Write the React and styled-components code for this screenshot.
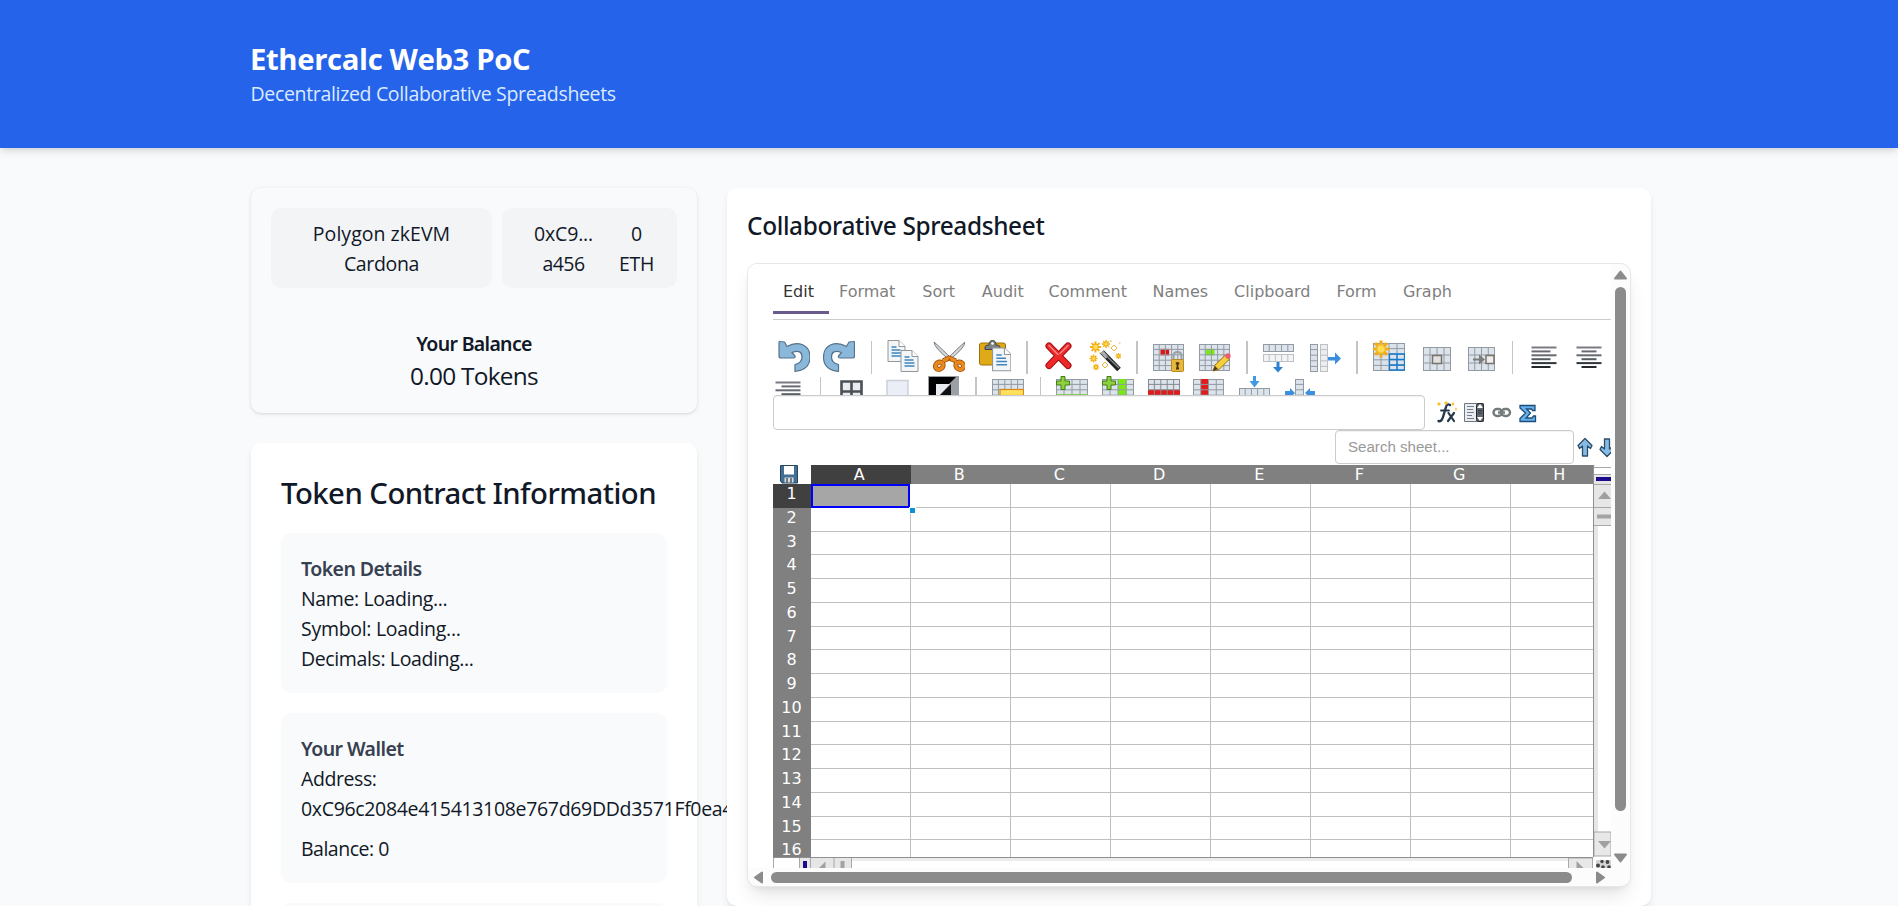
import React from "react";
import styled, { createGlobalStyle, css } from "styled-components";

const GlobalStyle = createGlobalStyle`
  * { box-sizing: border-box; }
  body {
    margin: 0;
    height: 906px;
    overflow: hidden;
    background: #f9fafb;
    color: #111827;
    font-family: "Open Sans", "Noto Sans", sans-serif;
    font-size: 19.5px;
    line-height: 30px;
  }
  h1, h2, h3, p { margin: 0; }
`;

/* ---------- page ---------- */

const Header = styled.header`
  height: 148px;
  padding: 40px 250px;
  background: #2563eb;
  box-shadow: 0 5px 8px -1px rgba(0, 0, 0, 0.1), 0 2px 5px -2px rgba(0, 0, 0, 0.1);
`;

const Title = styled.h1`
  font-size: 29.3px;
  font-weight: 700;
  line-height: 39px;
  letter-spacing: -0.38px;
  color: #fff;
`;

const Subtitle = styled.p`
  padding-left: 0.5px;
  color: #dbeafe;
  letter-spacing: -0.33px;
`;

const Main = styled.main`
  display: grid;
  grid-template-columns: 446px 924px;
  column-gap: 30px;
  align-items: start;
  padding: 40px 0 0 251px;
  height: 758px;
  overflow: hidden;
`;

const Sidebar = styled.div`
  display: flex;
  flex-direction: column;
  gap: 30px;
`;

const Text = styled.p`
  letter-spacing: ${(p) => p.$track ?? -0.33}px;
  white-space: nowrap;
`;

const cardShadow = css`
  box-shadow: 0 5px 8px -1px rgba(0, 0, 0, 0.08), 0 2px 5px -2px rgba(0, 0, 0, 0.08);
`;

const AccountCard = styled.section`
  height: 225px;
  padding: 20px;
  border-radius: 10px;
  text-align: center;
  box-shadow: 0 1px 4px rgba(0, 0, 0, 0.1), 0 1px 2px rgba(0, 0, 0, 0.06);
`;

const AccountButtons = styled.div`
  display: flex;
  gap: 10px;
  margin-bottom: 41px;
`;

const Pill = styled.div`
  display: flex;
  justify-content: center;
  gap: 26px;
  width: ${(p) => p.$width}px;
  height: 80px;
  padding: 11px 0 9px ${(p) => p.$indent ?? 0}px;
  border-radius: 10px;
  background: #f3f4f6;
`;

const BalanceLabel = styled(Text)`
  font-family: "Noto Sans", sans-serif;
  font-weight: 600;
`;

const BalanceValue = styled(Text)`
  font-size: 24.4px;
  line-height: 34px;
`;

const TokenCard = styled.section`
  height: 760px;
  padding: 30px;
  border-radius: 10px;
  background: #fff;
  ${cardShadow}
`;

const TokenTitle = styled.h2`
  margin-bottom: 20px;
  font-family: "Noto Sans", sans-serif;
  font-size: 29.3px;
  font-weight: 500;
  line-height: 40px;
  letter-spacing: -0.53px;
  white-space: nowrap;
`;

const InfoBox = styled.div`
  height: ${(p) => p.$height}px;
  margin-bottom: 20px;
  padding: 21px 20px 19px;
  border-radius: 10px;
  background: #f9fafb;
`;

const InfoTitle = styled.h3`
  font-family: "Noto Sans", sans-serif;
  font-size: 19.5px;
  font-weight: 600;
  letter-spacing: -0.56px;
  color: #374151;
`;

const WalletBalance = styled(Text)`
  margin-top: 10px;
`;

/* ---------- spreadsheet card ---------- */

const SheetCard = styled.section`
  position: relative;
  height: 718px;
  padding: 20px;
  border-radius: 10px;
  background: #fff;
  ${cardShadow}
`;

const SheetTitle = styled.h2`
  padding-top: 1px;
  margin-bottom: 20px;
  font-family: "Noto Sans", sans-serif;
  font-size: 24.4px;
  font-weight: 500;
  line-height: 34px;
  letter-spacing: -0.36px;
`;

const Frame = styled.div`
  display: grid;
  grid-template-columns: 863px 19px;
  grid-template-rows: 604px 18px;
  width: 884px;
  height: 624px;
  border: 1px solid #e5e7eb;
  border-radius: 10px;
  overflow: hidden;
  background: #fcfcfc;
  box-shadow: 0 12px 19px -4px rgba(0, 0, 0, 0.1), 0 5px 8px -5px rgba(0, 0, 0, 0.1);
`;

const Viewport = styled.div`
  padding-left: 25px;
  overflow: hidden;
  background: #fff;
  font-family: "DejaVu Sans", sans-serif;
  font-size: 16px;
  line-height: 20px;
`;

const Tabs = styled.nav`
  display: flex;
  height: 56px;
  border-bottom: 1px solid #ccc;
`;

const Tab = styled.div`
  flex: none;
  width: ${(p) => p.$width}px;
  height: 50px;
  padding: 18px 0 0 10px;
  border-bottom: 3px solid ${(p) => (p.$active ? "#6b5a8c" : "transparent")};
  color: ${(p) => (p.$active ? "#333" : "#808080")};
`;

const Toolbar = styled.div`
  height: 75px;
  padding: 20px 0 0 4.5px;
  overflow: hidden;
`;

const ToolRow = styled.div`
  display: flex;
  width: 900px;
  height: 36px;
  margin-left: ${(p) => p.$shift ?? 0}px;
`;

const Tool = styled.svg`
  flex: none;
  display: block;
  width: 32px;
  height: 33px;
  margin-right: 13.6px;
`;

const Divider = styled.span`
  flex: none;
  width: 1.4px;
  height: 33px;
  margin: 1px 15.4px 0 2px;
  background: #c4c4c4;
`;

const FormulaBar = styled.div`
  display: flex;
  align-items: center;
  height: 35px;
`;

const FormulaInput = styled.div`
  width: 652px;
  height: 35px;
  margin-right: 11px;
  border: 1px solid #ccc;
  border-radius: 4px;
  box-shadow: inset 0 1px 1px rgba(0, 0, 0, 0.06);
`;

const FormulaIcons = styled.svg`
  width: 110px;
  height: 24px;
`;

const SearchBar = styled.div`
  display: flex;
  align-items: center;
  height: 35px;
  padding-left: 562px;
`;

const SearchInput = styled.div`
  flex: none;
  width: 239px;
  height: 34px;
  margin: 0 2px 1px 0;
  padding-left: 12px;
  border: 1px solid #ccc;
  border-radius: 4px;
  box-shadow: inset 0 1px 1px rgba(0, 0, 0, 0.06);
  font: 15.1px/32px "Liberation Sans", Arial, sans-serif;
  color: #999;
`;

const SearchArrows = styled.svg`
  flex: none;
  width: 40px;
  height: 24px;
`;

const SheetArea = styled.div`
  display: grid;
  grid-template-columns: 820px 18px;
  grid-template-rows: 392px 12px;
`;

const Grid = styled.div`
  overflow: hidden;
`;

const GridRow = styled.div`
  display: grid;
  grid-template-columns: 38px repeat(8, 100px);
  width: 838px;
  height: ${(p) => p.$height ?? 23.75}px;
`;

const Corner = styled.div`
  padding-left: 7px;
`;

const Heading = styled.div`
  height: 100%;
  padding-right: ${(p) => p.$inset ?? 1}px;
  overflow: hidden;
  text-align: center;
  line-height: 20px;
  color: #fff;
  background: ${(p) => (p.$selected ? "#404040" : "#808080")};
`;

const Cell = styled.div`
  position: relative;
  border-right: 1px solid #c0c0c0;
  border-bottom: 1px solid #c0c0c0;
`;

const SelectedCell = styled(Cell)`
  z-index: 1;
  border: 2px solid #0000ff;
  background: #a6a6a6;
  margin-right: 1px;
`;

const FillHandle = styled.span`
  position: absolute;
  right: -8px;
  bottom: -8px;
  width: 7px;
  height: 7px;
  border: 1px solid #fff;
  background: #0e90d9;
`;

const ScrollDrawing = styled.svg`
  display: block;
  overflow: hidden;
`;

const SaveDrawing = styled.svg`
  display: block;
  width: 18px;
  height: 19px;
`;

const BottomBar = styled.div`
  grid-column: 1 / -1;
`;

/* ---------- icon parts ---------- */

const Table = ({ x = 0, y = 4, w = 31, h = 27, cols = 5, rows = 5, line = "#929aa3", fill = "#dce3eb", cells = [] }) => {
  const cw = w / cols;
  const rh = h / rows;
  return (
    <g>
      <rect x={x + 0.5} y={y + 0.5} width={w - 1} height={h - 1} fill={fill} stroke={line} />
      {cells.map(([c, r, cc, rr, color], i) => (
        <rect key={i} x={x + c * cw} y={y + r * rh} width={cc * cw} height={rr * rh} fill={color} />
      ))}
      {Array.from({ length: cols - 1 }, (_, i) => (
        <path key={"c" + i} d={`M${x + (i + 1) * cw} ${y}v${h}`} stroke={line} />
      ))}
      {Array.from({ length: rows - 1 }, (_, i) => (
        <path key={"r" + i} d={`M${x} ${y + (i + 1) * rh}h${w}`} stroke={line} />
      ))}
    </g>
  );
};

const Sheet = ({ x, y }) => (
  <g transform={`translate(${x} ${y})`}>
    <path d="M.5.5h11l6 6V21.500H.5z" fill="#f3f5f7" stroke="#92979c" />
    <path d="M11.500.5v6h6" fill="#fff" stroke="#92979c" />
    <path d="M4 7h5M4 10h9M4 13h10M4 16h10" stroke="#3f87c0" strokeWidth="1.300" />
  </g>
);

const Plus = () => (
  <path d="M5 .5h4v4.500h4.500v4H9v4.500H5V9H.5V5H5z" fill="#8fce3c" stroke="#3f7f14" />
);

const Star = ({ x, y, r }) => (
  <g transform={`translate(${x} ${y})`}>
    <path
      d={`M${-r} 0H${r}M0 ${-r}V${r}M${-r * 0.7} ${-r * 0.7}L${r * 0.7} ${r * 0.7}M${-r * 0.7} ${r * 0.7}L${r * 0.7} ${-r * 0.7}`}
      stroke="#f2ae12"
      strokeWidth={r / 2.7}
    />
    <circle r={r / 2} fill="#ffdc55" stroke="#eba90b" strokeWidth=".7" />
  </g>
);

const LINE_SHADES = ["#7a7a84", "#6a6a76", "#666a72", "#565c62", "#30363c", "#22282c"];

const Lines = ({ rows, y = 6.5, x = 2.5 }) => (
  <g>
    {rows.map(([a, w], i) => (
      <rect key={i} x={x + a} y={y + i * 3.9} width={w} height="2" fill={LINE_SHADES[i]} />
    ))}
  </g>
);

const UndoArrow = () => (
  <path
    d="M2 1.500Q1 1 1 3v13q0 2 2 2h12.500q2 0 1.500-2l-3-3.500Q24 9 24 17q0 6-7 7.500v7Q32 30 32 17C32 5 20 0 9 6.500L6.500 2z"
    fill="#8ab8da"
    stroke="#55718b"
    strokeWidth="1.200"
    strokeLinejoin="round"
  />
);

const LIME = "#79ea13";
const RED = "#e01b1b";

const ICONS = {
  undo: <UndoArrow />,
  redo: (
    <g transform="translate(32.500 0) scale(-1 1)">
      <UndoArrow />
    </g>
  ),
  copy: (
    <g>
      <Sheet x={0.5} y={0} />
      <Sheet x={13.5} y={10} />
    </g>
  ),
  cut: (
    <g>
      <path d="M1 2q0 6 17 19l2-1Q8 8 1 2zM32 2q0 6-17 19l-2-1Q25 8 32 2z" fill="#d4d7d9" stroke="#6d7175" strokeWidth=".9" />
      <g fill="none" stroke="#a95408" strokeWidth="5">
        <ellipse cx="6.300" cy="25.700" rx="4" ry="3.500" transform="rotate(-35 6.300 25.700)" />
        <ellipse cx="26.700" cy="25.700" rx="4" ry="3.500" transform="rotate(35 26.700 25.700)" />
        <path d="M10 21l6-3 7 3" />
      </g>
      <g fill="none" stroke="#e98a20" strokeWidth="3.200">
        <ellipse cx="6.300" cy="25.700" rx="4" ry="3.500" transform="rotate(-35 6.300 25.700)" />
        <ellipse cx="26.700" cy="25.700" rx="4" ry="3.500" transform="rotate(35 26.700 25.700)" />
        <path d="M10 21l6-3 7 3" />
      </g>
      <circle cx="16.500" cy="19.500" r="1" fill="#a95408" />
    </g>
  ),
  paste: (
    <g>
      <rect x=".5" y="3" width="26" height="22" rx="2" fill="#dfa917" stroke="#9b7209" />
      <path d="M6 9.500V7q0-2 4-2 0-4.500 3.500-4.500T17 5q4 0 4 2v2.500z" fill="#7d8184" stroke="#414548" />
      <circle cx="13.500" cy="3.500" r="1.300" fill="#fff" />
      <g transform="translate(13 7.500) scale(1.080)">
        <Sheet x={0} y={0} />
      </g>
    </g>
  ),
  erase: (
    <g strokeLinecap="round">
      <path d="M6 6l19 19.500M25 6L6 25.500" stroke="#a30d10" strokeWidth="7" />
      <path d="M6 6l19 19.500M25 6L6 25.500" stroke="#ee2929" strokeWidth="5" />
      <path d="M6 5.500l9 9M25 5.500l-8 8" stroke="#ff8585" strokeWidth="1.500" />
    </g>
  ),
  wand: (
    <g>
      <Star x={6.5} y={7} r={5.5} />
      <Star x={17} y={4} r={4} />
      <Star x={4.5} y={18.5} r={4} />
      <Star x={7} y={27} r={3.3} />
      <Star x={29.5} y={16} r={3} />
      <g fill="none" stroke="#eeb33c">
        <path d="M25 5l3 3-3 3-3-3zM16 22l3 3-3 3-3-3z" />
        <path d="M22 0v2M30 3h1.500M11 12v2" />
      </g>
      <path d="M13 12l17 17.500" stroke="#222" strokeWidth="5" />
      <path d="M13 12l5 5.500" stroke="#a7afb3" strokeWidth="3.500" />
      <path d="M17 15.500l13 12.500" stroke="#8b8f92" strokeWidth="1.100" />
    </g>
  ),
  lock: (
    <g>
      <Table cells={[[1.2, 0.9, 1.4, 1.2, "#d71616"]]} />
      <path d="M20.500 20v-4q0-4 4-4t4 4v4" fill="none" stroke="#9ba0a5" strokeWidth="2" />
      <rect x="18.500" y="19.500" width="12" height="12" rx="1" fill="#e7b83d" stroke="#b88a1f" />
      <path d="M24.500 22v6M22.800 23.500h3.500M23 28.500h3" stroke="#4c3608" strokeWidth="1.800" />
    </g>
  ),
  editCell: (
    <g>
      <Table cells={[[1.1, 0.9, 1.4, 1.2, LIME]]} />
      <path d="M14 31l2-6L26.500 15l4 4L20 29.500z" fill="#f6cf3a" stroke="#9b731b" />
      <path d="M14 31l2-5 3 3z" fill="#4b3820" />
      <circle cx="29" cy="16" r="2.700" fill="#ec5c74" />
    </g>
  ),
  merge: (
    <g>
      <Table y={4} h={8} rows={1} cols={5} />
      <Table y={14} h={8} rows={1} cols={5} fill="#f2f4f5" line="#bcc0c5" />
      <path d="M13.500 22h3v5h3.500l-5 5.500-5-5.500h3.500z" fill="#2c82d2" />
    </g>
  ),
  split: (
    <g>
      <Table x={1} w={8} h={28} cols={1} rows={5} />
      <Table x={11} w={8} h={28} cols={1} rows={5} fill="#eceeef" line="#bcc0c5" />
      <path d="M19 17h7V12.500l6 6-6 6v-4h-7z" fill="#3c8fdf" />
    </g>
  ),
  newTable: (
    <g>
      <Table y={3} w={32} h={28} cols={4} rows={5} />
      <path d="M16.500 14h15v16h-15zM16.500 19.500h15M16.500 25h15M24 14v16" fill="none" stroke="#1279d1" strokeWidth="1.300" />
      <Star x={8} y={9} r={8.5} />
    </g>
  ),
  cell: (
    <g>
      <Table x={4} y={7} w={28} h={24} cols={4} rows={3} />
      <rect x="13.500" y="15.500" width="9" height="8" fill="#e2e1df" stroke="#77726c" strokeWidth="1.500" />
    </g>
  ),
  move: (
    <g>
      <Table x={4} y={7} w={27} h={24} cols={4} rows={3} />
      <rect x="22" y="15.500" width="8" height="8" fill="#eee" stroke="#77726c" strokeWidth="1.500" />
      <path d="M9 18.500h6v-4l6 5-6 5v-4H9z" fill="#7c7c7c" />
    </g>
  ),
  alignLeft: <Lines rows={[[0, 25], [0, 19], [0, 25], [0, 19], [0, 25], [0, 19]]} />,
  alignCenter: <Lines rows={[[0, 25], [5, 15], [0, 25], [5, 15], [0, 25], [5, 15]]} />,
  alignRight: <Lines x={3.5} y={5.5} rows={[[0, 25], [6, 19], [0, 25], [6, 19], [0, 25], [6, 19]]} />,
  borders: <path d="M5.500 5.500h20v20h-20zM15.500 5.500v20M5.500 15.500h20" fill="#e9ecf0" stroke="#4b5055" strokeWidth="2.600" />,
  fill: <rect x="5" y="4.500" width="21" height="22" fill="#e9eef7" stroke="#ccd0d7" strokeWidth="1.500" />,
  contrast: (
    <g>
      <path d="M0 0h31v31H0z" fill="#9ba0a6" />
      <path d="M1 1h27L1 28z" fill="#000" />
      <path d="M8 8h14L8 23z" fill="#e8ebef" />
      <path d="M23 8v15H8z" fill="#111" />
    </g>
  ),
  rowHighlight: (
    <g>
      <Table y={3} w={32} h={27} />
      <rect x="8" y="13.500" width="23.500" height="6" fill="#ffe25c" stroke="#db8419" strokeWidth="1.200" />
    </g>
  ),
  addRow: (
    <g>
      <Table y={3} w={32} h={27} cols={4} cells={[[0, 2.8, 4, 1.3, LIME]]} />
      <Plus />
    </g>
  ),
  addCol: (
    <g>
      <Table y={3} w={32} h={27} cols={4} cells={[[2, 0, 1.1, 5, LIME]]} />
      <Plus />
    </g>
  ),
  delRow: <Table y={3} w={32} h={27} line="#858b91" cells={[[0, 2, 5, 1.2, RED]]} />,
  delCol: <Table y={3} w={31} h={27} cols={4} cells={[[1, 0, 1, 5, RED]]} />,
  insertRow: (
    <g>
      <Table y={12} h={8} rows={1} />
      <path d="M14 0h3v5h3.500l-5 6.500-5-6.500H14z" fill="#4298e2" />
    </g>
  ),
  insertCol: (
    <g>
      <Table x={11} y={3} w={9} h={27} cols={1} rows={5} />
      <path d="M1 15h5v-3l5 5-5 5v-3H1zM31 15h-5v-3l-5 5 5 5v-3h5z" fill="#3c8fdf" />
    </g>
  ),
};

const ROW_ONE = ["undo", "redo", "|", "copy", "cut", "paste", "|", "erase", "wand", "|", "lock", "editCell", "|", "merge", "split", "|", "newTable", "cell", "move", "|", "alignLeft", "alignCenter"];
const ROW_TWO = ["alignRight", "|", "borders", "fill", "contrast", "|", "rowHighlight", "|", "addRow", "addCol", "delRow", "delCol", "insertRow", "insertCol"];

const Tools = ({ names, shift }) => (
  <ToolRow $shift={shift}>
    {names.map((name, i) =>
      name === "|" ? <Divider key={i} /> : <Tool key={i} viewBox="0 0 32 33">{ICONS[name]}</Tool>
    )}
  </ToolRow>
);

const TABS = [["Edit", 56], ["Format", 83.3], ["Sort", 59.5], ["Audit", 66.8], ["Comment", 104], ["Names", 81.5], ["Clipboard", 102.3], ["Form", 66.5], ["Graph", 70]];
const COLUMNS = ["A", "B", "C", "D", "E", "F", "G", "H"];
const ROWS = Array.from({ length: 16 }, (_, i) => i + 1);

const SaveIcon = () => (
  <SaveDrawing viewBox="0 0 18 19">
    <path d="M.5.5h17v17.500H2L.5 16z" fill="#426f93" stroke="#25465f" />
    <rect x="4" y="1" width="10" height="8.500" fill="#fff" />
    <rect x="4.500" y="12.500" width="9" height="5" fill="#d8dcdf" />
    <path d="M7 13v5M11 13v5" stroke="#4c5962" strokeWidth="1.500" />
  </SaveDrawing>
);

const EditorIcons = () => (
  <FormulaIcons viewBox="0 0 110 24">
    <g fill="none" stroke="#26384b" strokeLinecap="round">
      <path d="M2.500 20q3 1 4.500-4l3-10q1-4 4-2" strokeWidth="2.400" />
      <path d="M5 9.500h8" strokeWidth="1.800" />
      <path d="M12.500 12l5.500 8M18 12l-6 8" strokeWidth="2.200" />
    </g>
    <path d="M3 1l2 2-2 2-2-2zM10 0l2 2-2 2-2-2zM17 1l1.500 2L17 5l-1.500-2zM20 6l1 2-1 2-1-2z" fill="#f8c42c" />
    <path d="M28.500 2.500h19v18h-19z" fill="#e9edf1" stroke="#6f7880" />
    <path d="M31 5.500h7M31 8.500h6M31 11.500h7M31 14.500h5M31 17.500h7" stroke="#75808c" strokeWidth="1.200" />
    <rect x="40.500" y="2.500" width="7" height="18" rx="2" fill="#60666b" stroke="#24282b" />
    <path d="M41 7l3-4 3 4zM41 16l3 4 3-4z" fill="#fff" />
    <path d="M42 9.500h4M42 12h4" stroke="#35393d" />
    <g fill="none" stroke="#737a7a" strokeWidth="2.400">
      <rect x="57.500" y="8" width="8.500" height="7" rx="3.500" />
      <rect x="65.500" y="8" width="8.500" height="7" rx="3.500" />
      <path d="M62 11.500h7" />
    </g>
    <path d="M84 4.500h15v5h-2.500l-1-1.500h-5l4 4-4.500 5h6l1.500-2h2v5.500H84v-3l5.500-5.500L84 7z" fill="#64b1ec" stroke="#1c4d78" strokeWidth="1.300" />
  </FormulaIcons>
);

const FindArrows = () => (
  <SearchArrows viewBox="0 0 40 24">
    <g fill="#85bbe4" stroke="#2c4d69" strokeWidth="1.300" strokeLinejoin="round">
      <path d="M9 2.500l7 7-1.500 3-3-2.500v10h-5V10l-3 2.500-1.500-3z" />
      <path d="M31 20.500l7-7-1.500-3-3 2.500V3h-5v10l-3-2.500-1.500 3z" />
    </g>
  </SearchArrows>
);

const InnerVerticalScroll = () => (
  <ScrollDrawing width="18" height="392">
    <rect width="18" height="392" fill="#fff" />
    <rect x="1" y="61" width="4" height="307" fill="#e6e6e6" />
    <rect x="1" y="9" width="17" height="52" fill="#e6e6e6" />
    <path d="M0 .5h1.500M0 2.500h18M1 9.500h17M1 19.500h17M1 42.500h17M1 60.500h17" stroke="#a8a8a8" />
    <rect x="3" y="12" width="15" height="4" fill="#1c0a8c" />
    <path d="M5 34l6.500-7.500L18 34z" fill="#a0a0a0" />
    <rect x="4" y="49.500" width="14" height="4" fill="#a3a3a3" />
    <rect x="1" y="367" width="17" height="24" fill="#e8e8e8" stroke="#a8a8a8" />
    <path d="M5 376h13l-6.500 7.500z" fill="#a0a0a0" />
    <path d="M.5 0v392" stroke="#909090" />
  </ScrollDrawing>
);

const InnerHorizontalScroll = () => (
  <ScrollDrawing width="838" height="12">
    <rect width="838" height="12" fill="#fff" />
    <rect x="62" y="1" width="734" height="3" fill="#ececec" />
    <rect x="27" y="1" width="51" height="11" fill="#e6e6e6" />
    <path d="M.5 0v12M26.500 0v12M37.500 0v12M61 0v12M78.500 0v12" stroke="#a8a8a8" />
    <rect x="30" y="4" width="4" height="8" fill="#1c0a8c" />
    <path d="M45 12l7.500-7.500V12z" fill="#a0a0a0" />
    <rect x="67.500" y="4" width="4" height="8" fill="#a3a3a3" />
    <rect x="795.500" y="1" width="24" height="12" fill="#e8e8e8" stroke="#a8a8a8" />
    <path d="M803.500 4l8 8h-8z" fill="#a0a0a0" />
    <path d="M0 .5h820" stroke="#909090" />
    <rect x="823" y="3" width="15" height="9" fill="#d4d4d4" />
    <g fill="#444">
      <circle cx="825" cy="8.500" r="2" />
      <circle cx="829" cy="4.500" r="1.700" />
      <circle cx="834.500" cy="5" r="1.900" />
      <circle cx="830" cy="10" r="1.800" />
      <circle cx="836" cy="10" r="1.800" />
    </g>
  </ScrollDrawing>
);

const FrameVerticalScroll = () => (
  <ScrollDrawing width="19" height="604">
    <path d="M4 14.500L9.500 7.500l5.500 7z" fill="#8b8b8b" stroke="#8b8b8b" strokeWidth="2" strokeLinejoin="round" />
    <rect x="4" y="23" width="11" height="524" rx="5.500" fill="#8b8b8b" />
    <path d="M4 590.500l5.500 7 5.500-7z" fill="#8b8b8b" stroke="#8b8b8b" strokeWidth="2" strokeLinejoin="round" />
  </ScrollDrawing>
);

const FrameHorizontalScroll = () => (
  <ScrollDrawing width="863" height="18">
    <path d="M14 4.500v10l-7-5z" fill="#8b8b8b" stroke="#8b8b8b" strokeWidth="2" strokeLinejoin="round" />
    <rect x="23" y="4" width="801" height="11" rx="5.500" fill="#8b8b8b" />
    <path d="M849 4.500v10l7-5z" fill="#8b8b8b" stroke="#8b8b8b" strokeWidth="2" strokeLinejoin="round" />
  </ScrollDrawing>
);

const Spreadsheet = () => (
  <SheetArea>
    <Grid>
      <GridRow $height={19}>
        <Corner><SaveIcon /></Corner>
        {COLUMNS.map((c) => (
          <Heading key={c} $inset={3.5} $selected={c === "A"}>{c}</Heading>
        ))}
      </GridRow>
      {ROWS.map((r) => (
        <GridRow key={r}>
          <Heading $selected={r === 1}>{r}</Heading>
          {COLUMNS.map((c) =>
            r === 1 && c === "A" ? (
              <SelectedCell key={c}><FillHandle /></SelectedCell>
            ) : (
              <Cell key={c} />
            )
          )}
        </GridRow>
      ))}
    </Grid>
    <InnerVerticalScroll />
    <BottomBar><InnerHorizontalScroll /></BottomBar>
  </SheetArea>
);

export default function App() {
  return (
    <>
      <GlobalStyle />
      <Header>
        <Title>Ethercalc Web3 PoC</Title>
        <Subtitle>Decentralized Collaborative Spreadsheets</Subtitle>
      </Header>
      <Main>
        <Sidebar>
          <AccountCard>
            <AccountButtons>
              <Pill $width={221}>
                <div>
                  <Text $track={0.03}>Polygon zkEVM</Text>
                  <Text>Cardona</Text>
                </div>
              </Pill>
              <Pill $width={175} $indent={9}>
                <div>
                  <Text $track={-0.18}>0xC9...</Text>
                  <Text $track={-0.6}>a456</Text>
                </div>
                <div>
                  <Text>0</Text>
                  <Text>ETH</Text>
                </div>
              </Pill>
            </AccountButtons>
            <BalanceLabel $track={-0.68}>Your Balance</BalanceLabel>
            <BalanceValue $track={-0.7}>0.00 Tokens</BalanceValue>
          </AccountCard>
          <TokenCard>
            <TokenTitle>Token Contract Information</TokenTitle>
            <InfoBox $height={160}>
              <InfoTitle>Token Details</InfoTitle>
              <Text $track={-0.38}>Name: Loading...</Text>
              <Text $track={-0.29}>Symbol: Loading...</Text>
              <Text $track={-0.38}>Decimals: Loading...</Text>
            </InfoBox>
            <InfoBox $height={170}>
              <InfoTitle>Your Wallet</InfoTitle>
              <Text $track={-0.42}>Address:</Text>
              <Text>0xC96c2084e415413108e767d69DDd3571Ff0ea456</Text>
              <WalletBalance $track={-0.5}>Balance: 0</WalletBalance>
            </InfoBox>
            <InfoBox $height={160} />
          </TokenCard>
        </Sidebar>
        <SheetCard>
          <SheetTitle>Collaborative Spreadsheet</SheetTitle>
          <Frame>
            <Viewport>
              <Tabs>
                {TABS.map(([name, width], i) => (
                  <Tab key={name} $width={width} $active={i === 0}>{name}</Tab>
                ))}
              </Tabs>
              <Toolbar>
                <Tools names={ROW_ONE} />
                <Tools names={ROW_TWO} shift={-5.5} />
              </Toolbar>
              <FormulaBar>
                <FormulaInput />
                <EditorIcons />
              </FormulaBar>
              <SearchBar>
                <SearchInput>Search sheet...</SearchInput>
                <FindArrows />
              </SearchBar>
              <Spreadsheet />
            </Viewport>
            <FrameVerticalScroll />
            <FrameHorizontalScroll />
          </Frame>
        </SheetCard>
      </Main>
    </>
  );
}
